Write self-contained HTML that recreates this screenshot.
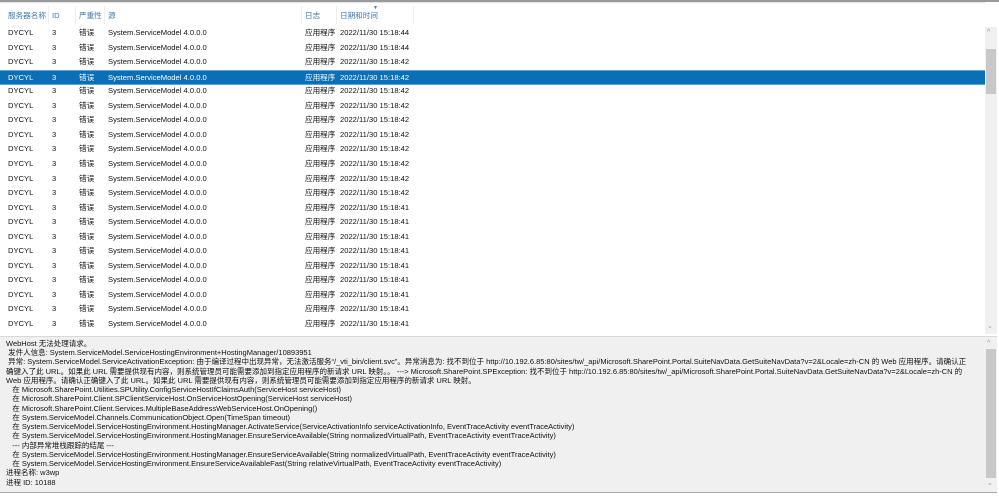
<!DOCTYPE html><html><head><meta charset="utf-8"><style>
body{margin:0;width:999px;height:496px;overflow:hidden;background:#fff;font-family:"Liberation Sans","Noto Sans CJK SC",sans-serif;font-size:7.6px;color:#111;position:relative;line-height:10px}
.top{position:absolute;left:0;top:0;width:999px;height:2px;background:#9a9a9a}
.hdr{position:absolute;top:2px;left:0;width:985px;height:23px;border-top:1px solid #e4e4e4}
.hdr span{position:absolute;top:8px;color:#3b78b8;line-height:10px}
.hdr i{position:absolute;top:3px;width:1px;height:18px;background:#eee}
.row{position:absolute;left:0;width:985px;height:14px}
.row span{position:absolute;top:2px;white-space:nowrap;line-height:10px;height:10px}
.sel{background:#0b6fb6;color:#fff;border-top:1px solid #5aa6dc;border-bottom:1px solid #5aa6dc;height:13px}
.sb{position:absolute;background:#f0f0f0}
.th{position:absolute;background:#c8c8c8}
.det{position:absolute;left:0;top:336px;width:997px;height:155px;background:#f0f0f0;border-top:1px solid #d8d8d8;border-bottom:1px solid #aaa;overflow:hidden}
.det div{position:absolute;left:6px;white-space:nowrap;font-size:7.5px;color:#111;line-height:10px;height:10px}
.arr{position:absolute;font-size:7px;color:#999}
</style></head><body>
<div class="top"></div>
<div class="hdr">
<span style="left:8px">服务器名称</span><span style="left:52px">ID</span><span style="left:79px">严重性</span><span style="left:108px">源</span><span style="left:305px">日志</span><span style="left:340px">日期和时间</span>
<i style="left:48px"></i><i style="left:75px"></i><i style="left:104px"></i><i style="left:301px"></i><i style="left:336px"></i><i style="left:413px"></i>
<div style="position:absolute;left:373px;top:3px;font-size:5px;color:#3b78b8;line-height:5px">▼</div>
</div>
<div id="rows"></div>
<div class="sb" style="left:985px;top:27px;width:12px;height:307px"></div>
<div class="th" style="left:986px;top:49px;width:10px;height:45px"></div>
<div class="arr" style="left:987px;top:28px">^</div>
<div class="arr" style="left:987px;top:322px">⌄</div>
<div class="det" id="det"></div>
<div class="sb" style="left:985px;top:338px;width:12px;height:152px;background:#f0f0f0"></div>
<div class="th" style="left:986px;top:349px;width:10px;height:129px"></div>
<div class="arr" style="left:987px;top:339px">^</div>
<div class="arr" style="left:987px;top:479px">⌄</div>
<script>
var t=[44,44,42,42,42,42,42,42,42,42,42,42,41,41,41,41,41,41,41,41,41],h='';
for(var i=0;i<21;i++){var y=Math.round(26+i*14.55);h+='<div class="row'+(i==3?' sel':'')+'" style="top:'+y+'px"><span style="left:8px">DYCYL</span><span style="left:52px">3</span><span style="left:79px">错误</span><span style="left:108px">System.ServiceModel 4.0.0.0</span><span style="left:305px">应用程序</span><span style="left:340px">2022/11/30 15:18:'+t[i]+'</span></div>';}
document.getElementById('rows').innerHTML=h;
var L=['WebHost 无法处理请求。',
'&nbsp;发件人信息: System.ServiceModel.ServiceHostingEnvironment+HostingManager/10893951',
'&nbsp;异常: System.ServiceModel.ServiceActivationException: 由于编译过程中出现异常，无法激活服务“/_vti_bin/client.svc”。异常消息为: 找不到位于 http://10.192.6.85:80/sites/tw/_api/Microsoft.SharePoint.Portal.SuiteNavData.GetSuiteNavData?v=2&amp;Locale=zh-CN 的 Web 应用程序。请确认正',
'确键入了此 URL。如果此 URL 需要提供现有内容，则系统管理员可能需要添加到指定应用程序的新请求 URL 映射。。 ---&gt; Microsoft.SharePoint.SPException: 找不到位于 http://10.192.6.85:80/sites/tw/_api/Microsoft.SharePoint.Portal.SuiteNavData.GetSuiteNavData?v=2&amp;Locale=zh-CN 的',
'Web 应用程序。请确认正确键入了此 URL。如果此 URL 需要提供现有内容，则系统管理员可能需要添加到指定应用程序的新请求 URL 映射。',
'&nbsp;&nbsp;&nbsp;在 Microsoft.SharePoint.Utilities.SPUtility.ConfigServiceHostIfClaimsAuth(ServiceHost serviceHost)',
'&nbsp;&nbsp;&nbsp;在 Microsoft.SharePoint.Client.SPClientServiceHost.OnServiceHostOpening(ServiceHost serviceHost)',
'&nbsp;&nbsp;&nbsp;在 Microsoft.SharePoint.Client.Services.MultipleBaseAddressWebServiceHost.OnOpening()',
'&nbsp;&nbsp;&nbsp;在 System.ServiceModel.Channels.CommunicationObject.Open(TimeSpan timeout)',
'&nbsp;&nbsp;&nbsp;在 System.ServiceModel.ServiceHostingEnvironment.HostingManager.ActivateService(ServiceActivationInfo serviceActivationInfo, EventTraceActivity eventTraceActivity)',
'&nbsp;&nbsp;&nbsp;在 System.ServiceModel.ServiceHostingEnvironment.HostingManager.EnsureServiceAvailable(String normalizedVirtualPath, EventTraceActivity eventTraceActivity)',
'&nbsp;&nbsp;&nbsp;--- 内部异常堆栈跟踪的结尾 ---',
'&nbsp;&nbsp;&nbsp;在 System.ServiceModel.ServiceHostingEnvironment.HostingManager.EnsureServiceAvailable(String normalizedVirtualPath, EventTraceActivity eventTraceActivity)',
'&nbsp;&nbsp;&nbsp;在 System.ServiceModel.ServiceHostingEnvironment.EnsureServiceAvailableFast(String relativeVirtualPath, EventTraceActivity eventTraceActivity)',
'进程名称: w3wp','进程 ID: 10188'],d='';
for(var j=0;j<L.length;j++)d+='<div style="top:'+(1.7+j*9.27).toFixed(2)+'px">'+L[j]+'</div>';
document.getElementById('det').innerHTML=d;
</script>
</body></html>
